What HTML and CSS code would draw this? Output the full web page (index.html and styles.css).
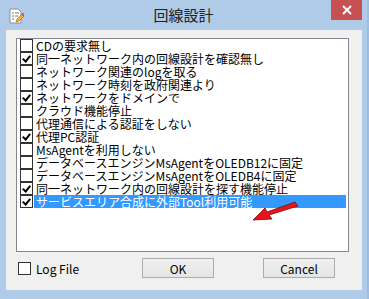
FILE: index.html
```html
<!DOCTYPE html>
<html>
<head>
    <title>回線設計</title>
    <link rel="stylesheet" href="styles.css">
</head>
<body>
    <div class="window">
        <div class="titlebar">
            <svg class="app-icon" width="16" height="16" viewBox="0 0 16 16">
                <path d="M2 1h8l3 3v11H2z" fill="#fff" stroke="#8a8f99"/>
                <path d="M4 5h2M4 8h2M4 11h2M7 5h4M7 8h3" stroke="#6a7384"/>
                <path d="M8 14l1-3 6-6 2 2-6 6z" fill="#f2b632" stroke="#b06a10" stroke-width="0.7"/>
                <path d="M14 6l2 2" stroke="#d04040" stroke-width="1.5"/>
            </svg>
            <div class="title">回線設計</div>
            <div class="close">
                <svg width="10" height="10" viewBox="0 0 10 10">
                    <path d="M1 1l8 8M9 1l-8 8" stroke="#fff" stroke-width="2"/>
                </svg>
            </div>
        </div>

        <div class="client">
            <div class="listbox">
                <div class="row"><span class="box"></span><span class="label">CDの要求無し</span></div>
                <div class="row"><span class="box checked"></span><span class="label">同一ネットワーク内の回線設計を確認無し</span></div>
                <div class="row"><span class="box"></span><span class="label">ネットワーク関連のlogを取る</span></div>
                <div class="row"><span class="box"></span><span class="label">ネットワーク時刻を政府関連より</span></div>
                <div class="row"><span class="box checked"></span><span class="label">ネットワークをドメインで</span></div>
                <div class="row"><span class="box"></span><span class="label">クラウド機能停止</span></div>
                <div class="row"><span class="box"></span><span class="label">代理通信による認証をしない</span></div>
                <div class="row"><span class="box checked"></span><span class="label">代理PC認証</span></div>
                <div class="row"><span class="box"></span><span class="label">MsAgentを利用しない</span></div>
                <div class="row"><span class="box"></span><span class="label">データベースエンジンMsAgentをOLEDB12に固定</span></div>
                <div class="row"><span class="box"></span><span class="label">データベースエンジンMsAgentをOLEDB4に固定</span></div>
                <div class="row"><span class="box checked"></span><span class="label">同一ネットワーク内の回線設計を探す機能停止</span></div>
                <div class="row selected"><span class="box checked"></span><span class="label">サービスエリア合成に外部Tool利用可能</span></div>

                <svg class="arrow" width="50" height="22" viewBox="0 0 50 22">
                    <path d="M1 20L13 8l2 4L43 2l3 4-29 9 3 4z" fill="#e8141b" stroke="#7a0a0a" stroke-width="0.8"/>
                </svg>
            </div>

            <div class="footer">
                <div class="logfile"><span class="box"></span><span>Log File</span></div>
                <button class="btn ok">OK</button>
                <button class="btn cancel">Cancel</button>
            </div>
        </div>
    </div>
</body>
</html>
```

FILE: styles.css
```css
/* Dialog */
body {
    margin: 0;
    font-family: "Noto Sans CJK JP", "Liberation Sans", sans-serif;
    font-size: 12px;
    background-color: #b3cde9;
}
.window {
    width: 369px;
    height: 299px;
    background-color: #b0cbe8;
    box-sizing: border-box;
    border-right: 2px solid #9fbde0;
}
.titlebar {
    height: 30px;
    display: flex;
    align-items: flex-start;
    position: relative;
}
.app-icon {
    margin: 8px 0 0 8px;
}
.title {
    position: absolute;
    left: 0;
    right: 0;
    top: 5px;
    text-align: center;
    font-size: 15px;
    color: #222;
    line-height: 20px;
}
.close {
    position: absolute;
    right: 5px;
    top: 0;
    width: 31px;
    height: 20px;
    background-color: #c75050;
    display: flex;
    align-items: center;
    justify-content: center;
}
.client {
    margin-left: 6px;
    width: 356px;
    height: 260px;
    background-color: #f0f0f0;
    padding: 8px 0 0 10px;
    box-sizing: border-box;
}
.listbox {
    position: relative;
    width: 333px;
    height: 214px;
    box-sizing: border-box;
    border: 1px solid #828790;
    background-color: #fff;
    padding-left: 3px;
}
.row {
    height: 13px;
    display: flex;
    align-items: center;
    line-height: 13px;
    color: #000;
}
.box {
    width: 11px;
    height: 11px;
    border: 1px solid #333;
    background-color: #fff;
    flex: none;
    margin-right: 1px;
    position: relative;
}
.box.checked::after {
    content: "";
    position: absolute;
    left: 3px;
    top: 1px;
    width: 3px;
    height: 6px;
    border-right: 2px solid #000;
    border-bottom: 2px solid #000;
    transform: rotate(40deg);
}
.label {
    flex: 1;
    padding-left: 2px;
    white-space: nowrap;
    height: 13px;
}
.row.selected .label {
    background-color: #3399ff;
    color: #fff;
    margin-right: 2px;
}
.arrow {
    position: absolute;
    left: 235px;
    top: 161px;
}
.footer {
    display: flex;
    align-items: center;
    height: 20px;
    margin-top: 6px;
}
.logfile {
    display: flex;
    align-items: center;
    width: 124px;
    padding-left: 2px;
}
.logfile .box {
    margin-right: 5px;
}
.btn {
    font-family: "Noto Sans CJK JP", "Liberation Sans", sans-serif;
    font-size: 12px;
    height: 20px;
    width: 72px;
    border: 1px solid #acacac;
    background: linear-gradient(#f0f0f0, #e5e5e5);
    padding: 0;
    color: #000;
}
.cancel {
    margin-left: 49px;
}
```
